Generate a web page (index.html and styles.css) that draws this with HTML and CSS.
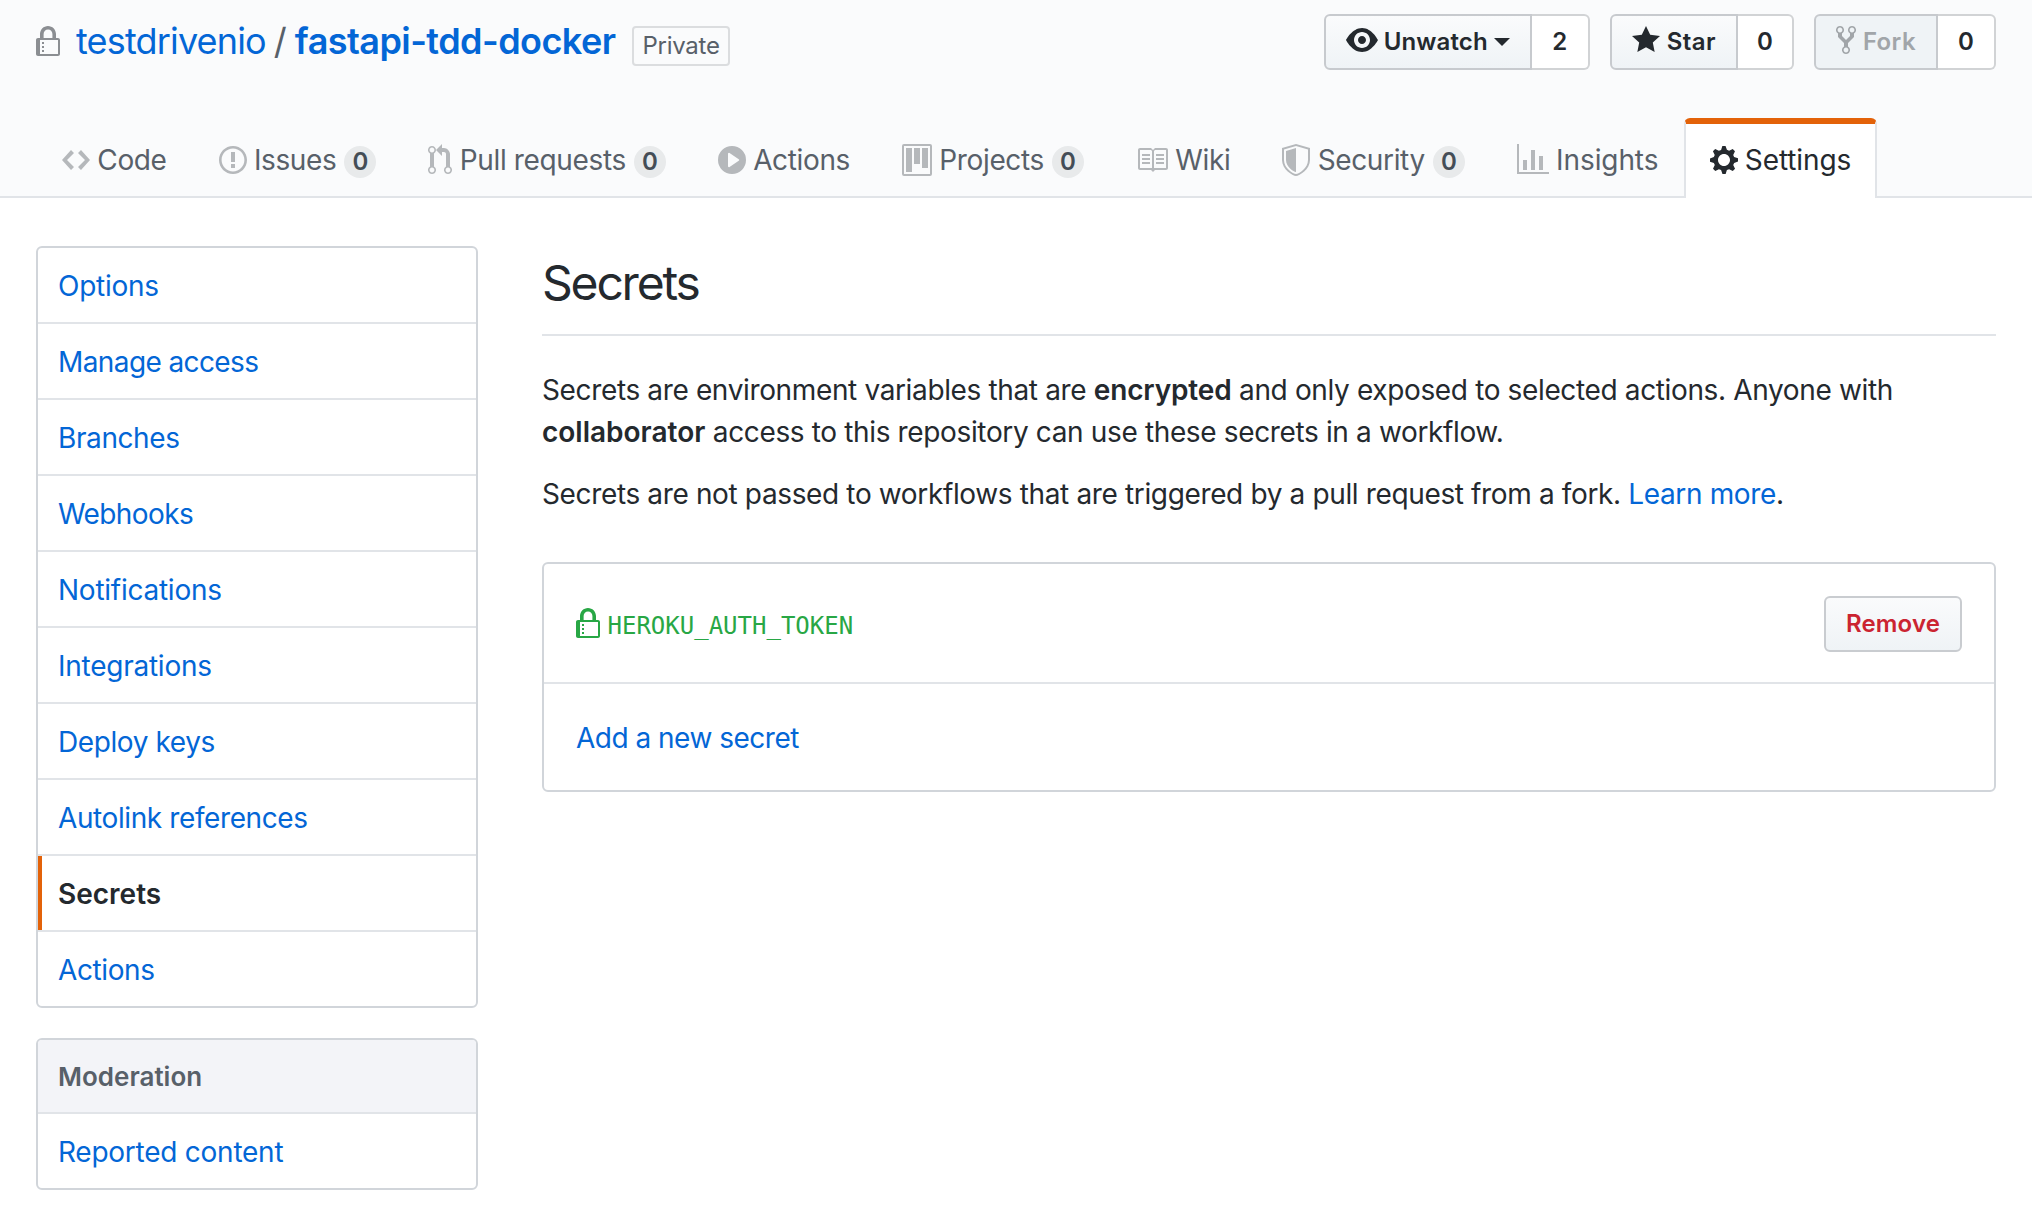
FILE: index.html
```html
<!DOCTYPE html>
<html lang="en">
<head>
<meta charset="utf-8">
<title>Secrets</title>
<link rel="stylesheet" href="styles.css">
</head>
<body>
<header class="head">
  <div class="title-row">
    <h1 class="repo">
      <svg class="icon repo-lock" width="24" height="32" viewBox="0 0 12 16"><path fill-rule="evenodd" d="M4 13H3v-1h1v1zm8-6v7c0 .55-.45 1-1 1H1c-.55 0-1-.45-1-1V7c0-.55.45-1 1-1h1V4c0-2.2 1.8-4 4-4s4 1.8 4 4v2h1c.55 0 1 .45 1 1zM3.8 6h4.41V4c0-1.22-.98-2.2-2.2-2.2-1.22 0-2.2.98-2.2 2.2v2H3.8zM11 7H2v7h9V7zM4 8H3v1h1V8zm0 2H3v1h1v-1z"/></svg>
      <a class="owner">testdrivenio</a><span class="slash">/</span><a class="name">fastapi-tdd-docker</a><span class="badge">Private</span>
    </h1>
    <div class="actions">
      <div class="group">
        <a class="btn watch"><svg class="icon" width="32" height="32" viewBox="0 0 16 16"><path fill-rule="evenodd" d="M8.06 2C3 2 0 8 0 8s3 6 8.06 6C13 14 16 8 16 8s-3-6-7.94-6zM8 12c-2.2 0-4-1.78-4-4 0-2.2 1.8-4 4-4 2.22 0 4 1.8 4 4 0 2.22-1.78 4-4 4zm2-4c0 1.11-.89 2-2 2-1.11 0-2-.89-2-2 0-1.11.89-2 2-2 1.11 0 2 .89 2 2z"/></svg><span class="label">Unwatch</span><span class="caret"></span></a><a class="count">2</a>
      </div>
      <div class="group">
        <a class="btn"><svg class="icon" width="28" height="32" viewBox="0 0 14 16"><path fill-rule="evenodd" d="M14 6l-4.9-.64L7 1 4.9 5.36 0 6l3.6 3.26L2.67 14 7 11.67 11.33 14l-.93-4.74L14 6z"/></svg><span class="label">Star</span></a><a class="count star-count">0</a>
      </div>
      <div class="group">
        <a class="btn disabled"><svg class="icon" width="20" height="32" viewBox="0 0 10 16"><path fill-rule="evenodd" d="M8 1a1.993 1.993 0 0 0-1 3.72V6L5 8 3 6V4.72A1.993 1.993 0 0 0 2 1a1.993 1.993 0 0 0-1 3.72V6.5l3 3v1.78A1.993 1.993 0 0 0 5 15a1.993 1.993 0 0 0 1-3.72V9.5l3-3V4.72A1.993 1.993 0 0 0 8 1zM2 4.2C1.34 4.2.8 3.65.8 3c0-.65.55-1.2 1.2-1.2.65 0 1.2.55 1.2 1.2 0 .65-.55 1.2-1.2 1.2zm3 10c-.66 0-1.2-.55-1.2-1.2 0-.65.55-1.2 1.2-1.2.65 0 1.2.55 1.2 1.2 0 .65-.55 1.2-1.2 1.2zm3-10c-.66 0-1.2-.55-1.2-1.2 0-.65.55-1.2 1.2-1.2.65 0 1.2.55 1.2 1.2 0 .65-.55 1.2-1.2 1.2z"/></svg><span class="label">Fork</span></a><a class="count">0</a>
      </div>
    </div>
  </div>
  <nav class="tabs">
    <a class="tab"><svg class="icon" width="28" height="32" viewBox="0 0 14 16"><path fill-rule="evenodd" d="M9.5 3L8 4.5 11.5 8 8 11.5 9.5 13 14 8 9.5 3zm-5 0L0 8l4.5 5L6 11.5 2.5 8 6 4.5 4.5 3z"/></svg><span class="label">Code</span></a>
    <a class="tab"><svg class="icon" width="28" height="32" viewBox="0 0 14 16"><path fill-rule="evenodd" d="M7 2.3c3.14 0 5.7 2.56 5.7 5.7s-2.56 5.7-5.7 5.7A5.71 5.71 0 0 1 1.3 8c0-3.14 2.56-5.7 5.7-5.7zM7 1C3.14 1 0 4.14 0 8s3.14 7 7 7 7-3.14 7-7-3.14-7-7-7zm1 3H6v5h2V4zm0 6H6v2h2v-2z"/></svg><span class="label">Issues</span><span class="counter">0</span></a>
    <a class="tab"><svg class="icon" width="24" height="32" viewBox="0 0 12 16"><path fill-rule="evenodd" d="M11 11.28V5c-.03-.78-.34-1.47-.94-2.06C9.46 2.35 8.78 2.03 8 2H7V0L4 3l3 3V4h1c.27.02.48.11.69.31.21.2.3.42.31.69v6.28A1.993 1.993 0 0 0 10 15a1.993 1.993 0 0 0 1-3.72zm-1 2.92c-.66 0-1.2-.55-1.2-1.2 0-.65.55-1.2 1.2-1.2.65 0 1.2.55 1.2 1.2 0 .65-.55 1.2-1.2 1.2zM4 3c0-1.11-.89-2-2-2a1.993 1.993 0 0 0-1 3.72v6.56A1.993 1.993 0 0 0 2 15a1.993 1.993 0 0 0 1-3.72V4.72c.59-.34 1-.98 1-1.72zm-.8 10c0 .66-.55 1.2-1.2 1.2-.65 0-1.2-.55-1.2-1.2 0-.65.55-1.2 1.2-1.2.65 0 1.2.55 1.2 1.2zM2 4.2C1.34 4.2.8 3.65.8 3c0-.65.55-1.2 1.2-1.2.65 0 1.2.55 1.2 1.2 0 .65-.55 1.2-1.2 1.2z"/></svg><span class="label">Pull requests</span><span class="counter">0</span></a>
    <a class="tab"><svg class="icon" width="28" height="32" viewBox="0 0 14 16"><path fill-rule="evenodd" d="M14 8A7 7 0 1 1 0 8a7 7 0 0 1 14 0zm-8.223 3.482l4.599-3.066a.5.5 0 0 0 0-.832L5.777 4.518A.5.5 0 0 0 5 4.934v6.132a.5.5 0 0 0 .777.416z"/></svg><span class="label">Actions</span></a>
    <a class="tab"><svg class="icon" width="30" height="32" viewBox="0 0 15 16"><path fill-rule="evenodd" d="M10 12h3V2h-3v10zm-4-2h3V2H6v8zm-4 4h3V2H2v12zm-1 1h13V1H1v14zM14 0H1a1 1 0 0 0-1 1v14a1 1 0 0 0 1 1h13a1 1 0 0 0 1-1V1a1 1 0 0 0-1-1z"/></svg><span class="label">Projects</span><span class="counter">0</span></a>
    <a class="tab"><svg class="icon" width="32" height="32" viewBox="0 0 16 16"><path fill-rule="evenodd" d="M3 5h4v1H3V5zm0 3h4V7H3v1zm0 2h4V9H3v1zm11-5h-4v1h4V5zm0 2h-4v1h4V7zm0 2h-4v1h4V9zm2-6v9c0 .55-.45 1-1 1H9.5l-1 1-1-1H2c-.55 0-1-.45-1-1V3c0-.55.45-1 1-1h5.5l1 1 1-1H15c.55 0 1 .45 1 1zm-8 .5L7.5 3H2v9h6V3.5zm7-.5H9.5l-.5.5V12h6V3z"/></svg><span class="label">Wiki</span></a>
    <a class="tab"><svg class="icon" width="28" height="32" viewBox="0 0 14 16"><path fill-rule="evenodd" d="M0 2l7-2 7 2v6.02C14 12.69 8.69 16 7 16c-1.69 0-7-3.31-7-7.98V2zm1 .75L7 1l6 1.75v5.268C13 12.104 8.449 15 7 15c-1.449 0-6-2.896-6-6.982V2.75zm1 .75L7 2v12c-1.207 0-5-2.482-5-5.985V3.5z"/></svg><span class="label">Security</span><span class="counter">0</span></a>
    <a class="tab wide"><svg class="icon" width="32" height="32" viewBox="0 0 16 16"><path fill-rule="evenodd" d="M16 14v1H0V0h1v14h15zM5 13H3V8h2v5zm4 0H7V3h2v10zm4 0h-2V6h2v7z"/></svg><span class="label">Insights</span></a>
    <a class="tab wide selected"><svg class="icon" width="28" height="32" viewBox="0 0 14 16"><path fill-rule="evenodd" d="M14 8.77v-1.6l-1.94-.64-.45-1.09.88-1.84-1.13-1.13-1.81.91-1.09-.45-.69-1.92h-1.6l-.63 1.94-1.11.45-1.84-.88-1.13 1.13.91 1.81-.45 1.09L0 7.23v1.59l1.94.64.45 1.09-.88 1.84 1.13 1.13 1.81-.91 1.09.45.69 1.92h1.59l.63-1.94 1.11-.45 1.84.88 1.13-1.13-.92-1.81.47-1.09L14 8.75v.02zM7 11c-1.66 0-3-1.34-3-3s1.34-3 3-3 3 1.34 3 3-1.34 3-3 3z"/></svg><span class="label">Settings</span></a>
  </nav>
</header>
<main class="layout">
  <aside class="side">
    <nav class="menu">
      <a class="item loose">Options</a>
      <a class="item tight">Manage access</a>
      <a class="item">Branches</a>
      <a class="item tight">Webhooks</a>
      <a class="item loose">Notifications</a>
      <a class="item loose">Integrations</a>
      <a class="item">Deploy keys</a>
      <a class="item">Autolink references</a>
      <a class="item current">Secrets</a>
      <a class="item">Actions</a>
    </nav>
    <nav class="menu">
      <h3 class="menu-head">Moderation</h3>
      <a class="item loose">Reported content</a>
    </nav>
  </aside>
  <section class="content">
    <h2 class="heading">Secrets</h2>
    <p class="para">Secrets are environment variables that are <strong class="loose">encrypted</strong> and only exposed to selected actions. Anyone with<br><strong>collaborator</strong> access to this repository can use these secrets in a workflow.</p>
    <p class="para">Secrets are not passed to workflows that are triggered by a pull request from a fork. <a class="link">Learn more</a>.</p>
    <div class="box">
      <div class="row secret">
        <svg class="icon" width="24" height="32" viewBox="0 0 12 16"><path fill-rule="evenodd" d="M4 13H3v-1h1v1zm8-6v7c0 .55-.45 1-1 1H1c-.55 0-1-.45-1-1V7c0-.55.45-1 1-1h1V4c0-2.2 1.8-4 4-4s4 1.8 4 4v2h1c.55 0 1 .45 1 1zM3.8 6h4.41V4c0-1.22-.98-2.2-2.2-2.2-1.22 0-2.2.98-2.2 2.2v2H3.8zM11 7H2v7h9V7zM4 8H3v1h1V8zm0 2H3v1h1v-1z"/></svg>
        <code class="token">HEROKU_AUTH_TOKEN</code>
        <button class="remove">Remove</button>
      </div>
      <div class="row"><a class="link add">Add a new secret</a></div>
    </div>
  </section>
</main>
</body>
</html>
```
FILE: styles.css
```css
* { box-sizing: border-box; }
body {
  margin: 0;
  background: #fff;
  color: #24292e;
  font: 28px/42px Inter, "Liberation Sans", sans-serif;
}
h1, h2, h3, p { margin: 0; font-weight: 400; }
.icon { display: block; flex: none; fill: currentColor; }

/* Repository header */
.head {
  height: 198px;
  display: flex;
  flex-direction: column;
  justify-content: space-between;
  background: #fafbfc;
  padding: 14px 36px 0;
  box-shadow: inset 0 -2px #e1e4e8;
}
.title-row { display: flex; justify-content: space-between; }
.repo {
  display: flex;
  align-items: flex-start;
  font-size: 36px;
  line-height: 54px;
  color: #586069;
}
.repo-lock { margin: 12px 16px 0 0; color: #8b8e92; }
.owner, .name, .link, .item { color: #0366d6; }
.owner { letter-spacing: -.83px; }
.slash { margin: 0 8px; }
.name { font-weight: 600; letter-spacing: -.56px; }
.badge {
  margin: 12px 0 0 17px;
  height: 40px;
  padding: 0 8px;
  border: 2px solid #dbdddf;
  border-radius: 4px;
  font-size: 24px;
  line-height: 36px;
  letter-spacing: -.25px;
}
.actions { display: flex; gap: 20px; }
.group { display: flex; height: 56px; font-size: 24px; font-weight: 600; line-height: 52px; }
.btn {
  display: flex;
  align-items: center;
  padding: 0 20px;
  border: 2px solid #c7cace;
  border-radius: 6px 0 0 6px;
  background: linear-gradient(#fafbfc, #eff3f6);
  letter-spacing: .4px;
}
.btn .icon { margin: -4px 7px 0 0; }
.watch { letter-spacing: .12px; }
.watch .icon { margin-right: 6px; }
.caret { margin-left: 6px; border: 8px solid transparent; border-top-color: #24292e; border-bottom: 0; }
.disabled { background: #eff3f6; color: #a1a5a9; }
.count {
  width: 58px;
  border: 2px solid #d1d3d5;
  border-left: 0;
  border-radius: 0 6px 6px 0;
  background: #fff;
  text-align: center;
}
.star-count { width: 56px; }

/* Tab bar */
.tabs { display: flex; }
.tab {
  display: flex;
  align-items: center;
  height: 80px;
  padding: 4px 24px 0;
  border: 2px solid transparent;
  border-width: 0 2px;
  color: #586069;
  letter-spacing: -.36px;
}
.tab .icon { margin-right: 7.3px; color: #b5b8bb; }
.tab.wide { letter-spacing: -.1px; }
.counter {
  margin: 4px 0 0 8px;
  width: 32px;
  height: 32px;
  border-radius: 16px;
  background: #e8eaeb;
  color: #444d56;
  font-size: 24px;
  font-weight: 600;
  line-height: 32px;
  letter-spacing: 0;
  text-align: center;
}
.tab.selected {
  padding: 0 24px 2px;
  border-top: 6px solid #e36209;
  border-left-color: #e1e4e8;
  border-right-color: #e1e4e8;
  border-radius: 6px 6px 0 0;
  background: #fff;
  color: #24292e;
}
.tab.selected .icon { margin-right: 6.5px; color: #24292e; }

/* Settings menu */
.layout { display: flex; gap: 64px; padding: 48px 36px 0; }
.side { width: 442px; flex: none; display: flex; flex-direction: column; gap: 30px; }
.menu { border: 2px solid #d1d5da; border-radius: 6px; overflow: hidden; }
.item {
  display: block;
  height: 76px;
  padding: 0 20px;
  border-bottom: 2px solid #e1e4e8;
  line-height: 76px;
  letter-spacing: -.4px;
}
.item:last-child { height: 74px; border-bottom: 0; }
.item.tight { letter-spacing: -.6px; }
.loose, .item.loose { letter-spacing: -.25px; }
.item.current {
  color: #24292e;
  font-weight: 600;
  letter-spacing: 0;
  box-shadow: inset 4px 0 #e36209;
}
.menu-head {
  height: 74px;
  padding: 0 20px;
  border-bottom: 2px solid #e1e4e8;
  background: #f3f4f8;
  color: #586069;
  font-size: 26px;
  font-weight: 600;
  line-height: 74px;
}

/* Secrets panel */
.content { flex: 1; }
.heading {
  height: 90px;
  margin-bottom: 33px;
  border-bottom: 2px solid #e1e4e8;
  font-size: 48px;
  line-height: 74px;
  letter-spacing: -2.2px;
}
.para { margin-bottom: 20px; white-space: nowrap; letter-spacing: -.36px; }
strong { font-weight: 600; letter-spacing: 0; }
strong.loose { letter-spacing: -.15px; }
.box { margin-top: 47px; border: 2px solid #d1d5da; border-radius: 6px; }
.row { display: flex; align-items: center; height: 106px; padding: 2px 32px 0; }
.secret { height: 120px; border-bottom: 2px solid #e1e4e8; color: #28a745; }
.add { letter-spacing: -.5px; }
.token { margin: 3px 0 0 7.5px; font: 24px/36px "DejaVu Sans Mono", monospace; }
.remove {
  margin-left: auto;
  height: 56px;
  padding: 0 20px;
  border: 2px solid #c9ccd0;
  border-radius: 6px;
  background: linear-gradient(#fafbfc, #eff3f6);
  color: #cb2431;
  font: 600 24px/50px Inter, "Liberation Sans", sans-serif;
  letter-spacing: .13px;
}
```
